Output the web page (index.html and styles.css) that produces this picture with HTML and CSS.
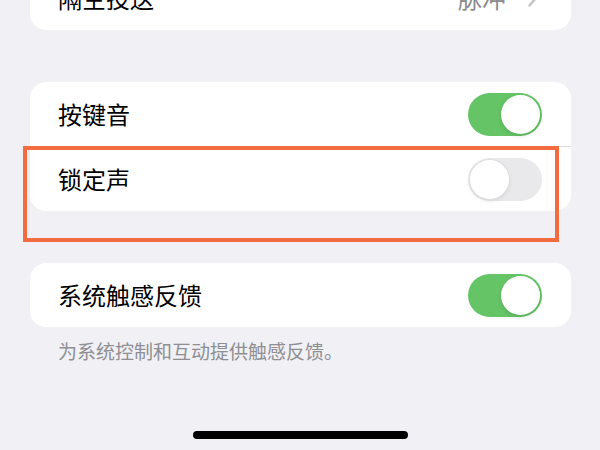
FILE: index.html
```html
<!DOCTYPE html>
<html lang="zh-CN">
<head>
<meta charset="utf-8">
<link rel="stylesheet" href="styles.css">
</head>
<body>
<div class="screen">
  <div class="card card-top">
    <div class="row">
      <span class="label">隔空投送</span>
      <span class="value">脉冲<svg class="chev" width="10" height="18" viewBox="0 0 10 18"><path d="M1.5 1.5 L8 9 L1.5 16.5" fill="none" stroke="#c4c4c7" stroke-width="2.4" stroke-linecap="round" stroke-linejoin="round"/></svg></span>
    </div>
  </div>

  <div class="card card-sounds">
    <div class="row">
      <span class="label">按键音</span>
      <span class="toggle on"><span class="knob"></span></span>
    </div>
    <div class="sep"></div>
    <div class="row">
      <span class="label">锁定声</span>
      <span class="toggle off"><span class="knob"></span></span>
    </div>
    <div class="highlight"></div>
  </div>

  <div class="card card-haptic">
    <div class="row">
      <span class="label">系统触感反馈</span>
      <span class="toggle on"><span class="knob"></span></span>
    </div>
  </div>
  <p class="footnote">为系统控制和互动提供触感反馈。</p>

  <div class="home"></div>
</div>
</body>
</html>
```

FILE: styles.css
```css
html, body {
  margin: 0;
  padding: 0;
  background: #f0f0f5;
}
.screen {
  width: 600px;
  height: 450px;
  overflow: hidden;
  display: flex;
  flex-direction: column;
  padding: 0 29px 0 30px;
  box-sizing: border-box;
  font-family: "Noto Sans CJK SC", "Noto Sans", sans-serif;
}
.card {
  background: #fff;
  border-radius: 16px;
  position: relative;
}
.card-top {
  margin-top: -34px;
}
.card-sounds {
  margin-top: 52px;
}
.card-haptic {
  margin-top: 52px;
}
.row {
  height: 64px;
  display: flex;
  align-items: center;
  justify-content: space-between;
  padding: 0 29px 0 28px;
}
.sep {
  height: 1px;
  background: #dcdce0;
  margin-left: 28px;
}
.label {
  font-size: 24px;
  color: #000;
  line-height: 1;
}
.value {
  display: flex;
  align-items: center;
  gap: 22px;
  font-size: 24px;
  color: #8a8a8e;
  line-height: 1;
  margin-right: 4px;
}
.toggle {
  width: 74px;
  height: 43px;
  border-radius: 22px;
  position: relative;
  box-sizing: border-box;
}
.toggle.on {
  background: #65c466;
}
.toggle.off {
  background: #e9e9eb;
}
.knob {
  position: absolute;
  top: 2px;
  width: 39px;
  height: 39px;
  border-radius: 50%;
  background: #fff;
  box-shadow: 0 2px 4px rgba(0,0,0,0.12);
}
.toggle.on .knob {
  right: 2px;
}
.toggle.off .knob {
  left: 2px;
  box-shadow: 0 0 0 1px #dedee0, 0 2px 4px rgba(0,0,0,0.10);
}
.highlight {
  position: absolute;
  left: -7px;
  top: 64px;
  width: 536px;
  height: 96px;
  border: 4px solid #f36c40;
  box-sizing: border-box;
}
.footnote {
  margin: 12px 0 0 28px;
  font-size: 19px;
  line-height: 24px;
  color: #8e8e93;
}
.home {
  width: 215px;
  height: 8px;
  border-radius: 4px;
  background: #000;
  margin: auto auto 11px 163px;
}
```
